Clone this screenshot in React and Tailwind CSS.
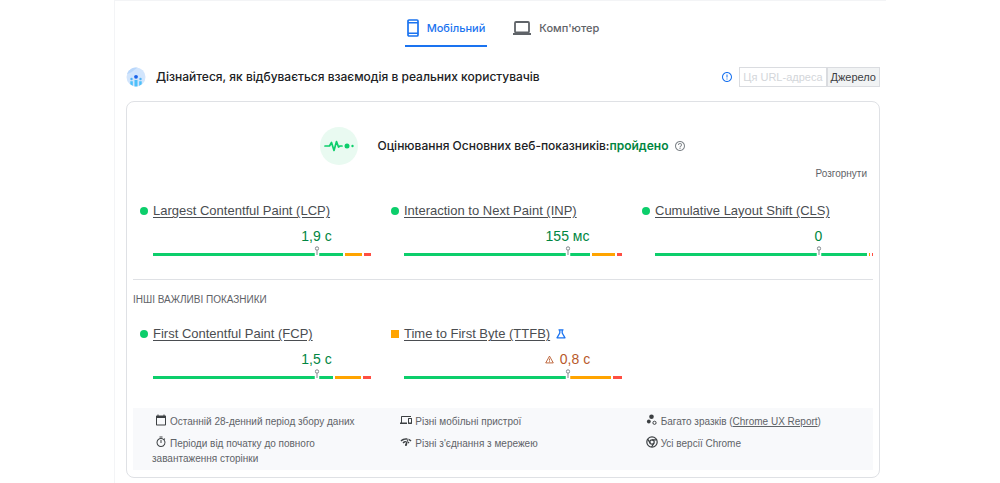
import React from 'react';
import clsx from 'clsx';
import {
    MdHelpOutline,
    MdErrorOutline,
    MdCalendarToday,
    MdOutlineTimer,
    MdDevices,
    MdNetworkCheck,
} from 'react-icons/md';

const coreMetrics = [
    { id: 'lcp', name: 'Largest Contentful Paint (LCP)', value: '1,9 с', status: 'good', split: [190, 17, 7] },
    { id: 'inp', name: 'Interaction to Next Paint (INP)', value: '155 мс', status: 'good', split: [186, 23, 5] },
    { id: 'cls', name: 'Cumulative Layout Shift (CLS)', value: '0', status: 'good', split: [213, 1, 1] },
];

const otherMetrics = [
    { id: 'fcp', name: 'First Contentful Paint (FCP)', value: '1,5 с', status: 'good', split: [180, 26, 8] },
    { id: 'ttfb', name: 'Time to First Byte (TTFB)', value: '0,8 с', status: 'average', split: [163, 42, 9], experimental: true },
];

const segmentColors = ['bg-[#0cce6b]', 'bg-[#ffa400]', 'bg-[#ff4e42]'];

const PhoneIcon = () => (
    <svg className="h-[18px] w-3" viewBox="0 0 12 18" fill="none" stroke="currentColor" aria-hidden="true">
        <rect x="1" y="1" width="10" height="16" rx="1" strokeWidth="1.700" />
        <path d="M1 3.800h10M1 14.200h10" strokeWidth="1.600" />
    </svg>
);

const LaptopIcon = () => (
    <svg className="h-[18px] w-[18px]" viewBox="0 0 18 18" fill="none" stroke="currentColor" aria-hidden="true">
        <rect x="2" y="3" width="14" height="10.500" rx="1" strokeWidth="1.800" />
        <path d="M0 15h18" strokeWidth="2" />
    </svg>
);

const FieldDataLogo = () => (
    <svg className="size-5 shrink-0" viewBox="0 0 20 20" aria-hidden="true">
        <circle cx="10" cy="10" r="9.500" fill="#d2e5fc" />
        <path d="M1 7a9.500 9.500 0 0 1 11-6.300C8 2 6.500 6 1 7Z" fill="#b9d7fb" />
        <circle cx="10" cy="9.800" r="1.900" fill="#1a63e8" />
        <circle cx="5.500" cy="12" r="1.200" fill="#4fb3f6" />
        <circle cx="14.500" cy="12" r="1.200" fill="#4fb3f6" />
        <path d="M8.500 13h3v6.400h-3zM4.300 14.300h2.500v4.400l-2.500-1.500zM13.200 14.300h2.500v2.900l-2.500 1.500z" fill="#4cc0fa" />
    </svg>
);

const PulseLogo = () => (
    <svg className="size-[38px] shrink-0" viewBox="0 0 38 38" aria-hidden="true">
        <circle cx="19" cy="19" r="19" fill="#e9faf1" />
        <path
            d="M5 19h4.500l2-3.500 2.500 8 2.500-9 2 5.500 1.500-1h2"
            fill="none"
            stroke="#0cce6b"
            strokeWidth="1.700"
            strokeLinecap="round"
            strokeLinejoin="round"
        />
        <circle cx="27" cy="19" r="2.500" fill="#0cce6b" />
        <circle cx="32.500" cy="19" r="1.200" fill="#0cce6b" />
    </svg>
);

const FlaskIcon = () => (
    <svg className="size-[10px] text-[#1a73f0]" viewBox="0 0 10 10" fill="none" stroke="currentColor" aria-hidden="true">
        <path d="M2.500.8h5M3.800 1v3L1 8.800h8L6.200 4V1" strokeWidth="1.300" strokeLinejoin="round" />
    </svg>
);

const WarningIcon = () => (
    <svg className="size-[9px]" viewBox="0 0 10 10" fill="none" stroke="currentColor" aria-hidden="true">
        <path d="M5 1.200 9.200 8.800H.8Z" strokeWidth="1" />
        <path d="M5 4v2.200M5 7v1" strokeWidth="1" />
    </svg>
);

const SamplesIcon = () => (
    <svg className="size-3" viewBox="0 0 12 12" aria-hidden="true">
        <circle cx="5.500" cy="2.800" r="2.300" fill="currentColor" />
        <circle cx="2.800" cy="7.500" r="1.900" fill="currentColor" />
        <circle cx="8.500" cy="8.800" r="1.600" fill="none" stroke="currentColor" />
    </svg>
);

const ChromeIcon = () => (
    <svg className="size-3" viewBox="0 0 12 12" fill="none" stroke="currentColor" strokeWidth="1.200" aria-hidden="true">
        <circle cx="6" cy="6" r="5.200" />
        <circle cx="6" cy="6" r="2.200" />
        <path d="M6 3.800h4.600M4.100 7.100 1.800 3.200M7.900 7.100 5.600 11" />
    </svg>
);

const Tab = ({ icon, label, active }) => (
    <button
        type="button"
        role="tab"
        aria-selected={active}
        className={clsx(
            'flex items-center gap-2 border-b-2 px-0.5 pt-3.5 pb-2 text-[11px] leading-[18px] font-medium',
            active ? 'border-[#1a73f0] text-[#1a73f0]' : 'border-transparent text-[#5f6368]'
        )}
    >
        {icon}
        {label}
    </button>
);

const MetricBar = ({ split }) => (
    <div className="relative flex h-[3px] gap-[2px]">
        {split.map((share, i) => (
            <div key={segmentColors[i]} className={segmentColors[i]} style={{ flexGrow: share }} />
        ))}
        <svg className="absolute bottom-0 left-3/4 h-[10px] w-[5px] -translate-x-1/2" viewBox="0 0 5 10" aria-hidden="true">
            <path d="M0 7h5v3H0z" fill="#fff" />
            <circle cx="2.500" cy="2.500" r="1.700" fill="#fff" stroke="#80868b" strokeWidth="1" />
            <path d="M2.500 4.300V9" stroke="#80868b" strokeWidth="1" />
        </svg>
    </div>
);

const Metric = ({ metric }) => {
    const good = metric.status === 'good';

    return (
        <div className="grid grid-cols-[8px_1fr] gap-x-[5px]">
            <span className={clsx('size-2 self-center', good ? 'rounded-full bg-[#0cce6b]' : 'bg-[#ffa400]')} />
            <div className="flex items-center gap-1.5 text-[13px] leading-4 text-[#4a4d51]">
                <a href={`#${metric.id}`} className="whitespace-nowrap underline underline-offset-2">
                    {metric.name}
                </a>
                {metric.experimental && <FlaskIcon />}
            </div>
            <div className="col-start-2 pt-2">
                <p
                    className={clsx(
                        'ml-[50%] flex items-center justify-center gap-1.5 pb-2 text-sm leading-[18px]',
                        good ? 'text-[#018642]' : 'text-[#b8592b]'
                    )}
                >
                    {!good && <WarningIcon />}
                    {metric.value}
                </p>
                <MetricBar split={metric.split} />
            </div>
        </div>
    );
};

const Note = ({ icon, children }) => (
    <li>
        <span className="mx-[3px] inline-block align-[-1px] text-[#3c4043]">{icon}</span>
        {children}
    </li>
);

const App = () => {
    return (
        <div className="min-h-screen bg-white font-['Liberation_Sans',sans-serif]">
            <main className="mx-auto min-h-screen max-w-[772px] border-t border-l border-gray-100 pr-1.5 pl-[11px]">
                <div role="tablist" className="flex justify-center gap-6 pt-1 font-[Inter,sans-serif]">
                    <Tab active icon={<PhoneIcon />} label="Мобільний" />
                    <Tab active={false} icon={<LaptopIcon />} label="Комп'ютер" />
                </div>

                <header className="flex items-center pt-5 pb-3.5">
                    <FieldDataLogo />
                    <h1 className="ml-2.5 flex-1 font-[Inter,sans-serif] text-xs leading-5 font-medium text-[#202124]">
                        Дізнайтеся, як відбувається взаємодія в реальних користувачів
                    </h1>
                    <MdErrorOutline size={12} className="mr-1.5 text-[#1a73f0]" />
                    <div className="flex text-[11px] leading-[18px]">
                        <button type="button" disabled className="border border-[#dadce0] px-[3px] text-[#d3d6da]">
                            Ця URL-адреса
                        </button>
                        <button type="button" className="border border-[#dadce0] bg-[#f1f3f4] px-[3px] text-[#3c4043]">
                            Джерело
                        </button>
                    </div>
                </header>

                <section className="rounded-lg border border-[#dfe1e5] px-1.5 pb-[7px]">
                    <div className="flex items-center justify-center gap-5 pt-[25px]">
                        <PulseLogo />
                        <div className="flex items-center gap-1.5">
                            <h2 className="font-[Inter,sans-serif] text-xs font-medium text-[#202124]">
                                Оцінювання Основних веб-показників:
                                <span className="font-semibold text-[#018642]">пройдено</span>
                            </h2>
                            <MdHelpOutline size={12} className="text-[#80868b]" />
                        </div>
                    </div>

                    <div className="flex justify-end pt-px pr-1.5">
                        <button type="button" className="text-[10px] leading-4 text-[#5f6368]">
                            Розгорнути
                        </button>
                    </div>

                    <div className="grid grid-cols-3 gap-x-5 pt-[21px] pb-[23px] pl-[7px]">
                        {coreMetrics.map((metric) => (
                            <Metric key={metric.id} metric={metric} />
                        ))}
                    </div>

                    <h3 className="border-t border-[#dfe1e5] pt-3 text-[10px] leading-4 text-[#5f6368] uppercase">
                        Інші важливі показники
                    </h3>

                    <div className="grid grid-cols-3 gap-x-5 pt-[18px] pb-[29px] pl-[7px]">
                        {otherMetrics.map((metric) => (
                            <Metric key={metric.id} metric={metric} />
                        ))}
                    </div>

                    <div className="grid grid-cols-3 gap-x-[34px] bg-[#f8f9fb] px-[19px] pt-1.5 pb-1 text-[10px] leading-[15px] text-[#5f6368]">
                        <ul className="space-y-[7px]">
                            <Note icon={<MdCalendarToday size={12} />}>Останній 28-денний період збору даних</Note>
                            <Note icon={<MdOutlineTimer size={12} />}>Періоди від початку до повного завантаження сторінки</Note>
                        </ul>
                        <ul className="space-y-[7px]">
                            <Note icon={<MdDevices size={12} />}>Різні мобільні пристрої</Note>
                            <Note icon={<MdNetworkCheck size={12} />}>Різні з'єднання з мережею</Note>
                        </ul>
                        <ul className="space-y-[7px]">
                            <Note icon={<SamplesIcon />}>
                                Багато зразків (
                                <a href="#crux" className="underline">
                                    Chrome UX Report
                                </a>
                                )
                            </Note>
                            <Note icon={<ChromeIcon />}>Усі версії Chrome</Note>
                        </ul>
                    </div>
                </section>
            </main>
        </div>
    );
};

export default App;
